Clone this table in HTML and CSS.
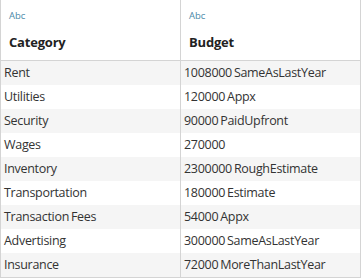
FILE: index.html
```html
<!DOCTYPE html>
<html>
<head>
<meta charset="utf-8">
<link rel="stylesheet" href="styles.css">
</head>
<body>
<div class="grid">
  <div class="head cell-l"><div class="type">Abc</div><div class="name">Category</div></div>
  <div class="head cell-r"><div class="type">Abc</div><div class="name">Budget</div></div>

  <div class="cell cell-l odd">Rent</div><div class="cell cell-r odd">1008000 SameAsLastYear</div>
  <div class="cell cell-l">Utilities</div><div class="cell cell-r">120000 Appx</div>
  <div class="cell cell-l odd">Security</div><div class="cell cell-r odd">90000 PaidUpfront</div>
  <div class="cell cell-l">Wages</div><div class="cell cell-r">270000</div>
  <div class="cell cell-l odd">Inventory</div><div class="cell cell-r odd">2300000 RoughEstimate</div>
  <div class="cell cell-l">Transportation</div><div class="cell cell-r">180000 Estimate</div>
  <div class="cell cell-l odd">Transaction Fees</div><div class="cell cell-r odd">54000 Appx</div>
  <div class="cell cell-l">Advertising</div><div class="cell cell-r">300000 SameAsLastYear</div>
  <div class="cell cell-l odd">Insurance</div><div class="cell cell-r odd">72000 MoreThanLastYear</div>
</div>
</body>
</html>
```
FILE: styles.css
```css
html, body {
  margin: 0;
  padding: 0;
  background: #ffffff;
}
.grid {
  display: grid;
  grid-template-columns: 180px 180px;
  width: 361px;
  border-left: 1px solid #d4d4d4;
  border-bottom: 1px solid #d4d4d4;
  box-sizing: border-box;
  font-family: "Open Sans", "Liberation Sans", sans-serif;
  color: #333333;
}
.cell-l, .cell-r {
  border-right: 1px solid #d4d4d4;
  width: 180px;
  box-sizing: border-box;
}
.head {
  height: 61px;
  border-bottom: 1px solid #d4d4d4;
  padding: 10px 0 0 8px;
}
.type {
  font-size: 9.5px;
  color: #4a89a8;
  line-height: 12px;
}
.name {
  margin-top: 12px;
  font-size: 13px;
  font-weight: 700;
  color: #222222;
  line-height: 16px;
  letter-spacing: -0.2px;
}
.cell {
  height: 24px;
  line-height: 24px;
  font-size: 12.5px;
  letter-spacing: -0.3px;
  word-spacing: -1px;
  padding-left: 3px;
  white-space: nowrap;
}
.odd {
  background: #f5f5f5;
}
```
